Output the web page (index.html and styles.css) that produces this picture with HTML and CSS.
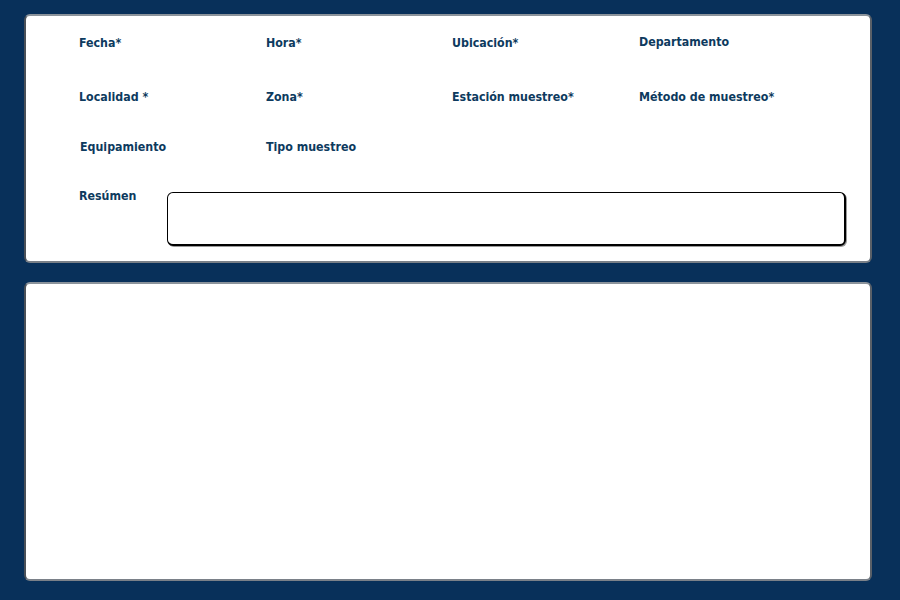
FILE: index.html
```html
<!DOCTYPE html>
<html lang="es">
<head>
<meta charset="utf-8">
<title>Muestreo</title>
<link rel="stylesheet" href="styles.css">
</head>
<body>
<div class="page">
  <section class="panel panel-form">
    <div class="fields">
      <div class="row row-1">
        <label class="lbl">Fecha*</label>
        <label class="lbl">Hora*</label>
        <label class="lbl">Ubicación*</label>
        <label class="lbl lbl-up">Departamento</label>
      </div>
      <div class="row row-2">
        <label class="lbl">Localidad *</label>
        <label class="lbl">Zona*</label>
        <label class="lbl">Estación muestreo*</label>
        <label class="lbl">Método de muestreo*</label>
      </div>
      <div class="row row-3">
        <label class="lbl lbl-shift">Equipamiento</label>
        <label class="lbl">Tipo muestreo</label>
      </div>
      <div class="row-summary">
        <label class="lbl">Resúmen</label>
        <div class="summary-box"></div>
      </div>
    </div>
  </section>
  <section class="panel panel-list"></section>
</div>
</body>
</html>
```
FILE: styles.css
```css
html, body {
  margin: 0;
  padding: 0;
  background: #08305a;
}
body {
  font-family: "DejaVu Sans Condensed", "DejaVu Sans", Verdana, sans-serif;
  width: 900px;
  height: 600px;
  overflow: hidden;
}
.page {
  padding: 14px 28px 19px 24px;
  display: flex;
  flex-direction: column;
  gap: 19px;
  height: 600px;
  box-sizing: border-box;
}
.panel {
  background: #fff;
  border: 2px solid;
  border-color: #8b939b #5a6068 #7a8088 #4a5058;
  border-radius: 6px;
  box-sizing: border-box;
}
.panel-form {
  height: 249px;
  padding: 20px 0 0 53px;
}
.panel-list {
  flex: 1;
}
.row {
  display: grid;
  grid-template-columns: 187px 186px 187px 187px;
}
.row-1 { height: 54px; }
.row-2 { height: 50px; }
.row-3 { height: 49px; }
.lbl {
  font-size: 12.3px;
  font-weight: bold;
  color: #0d3a5e;
  line-height: 15px;
  display: block;
}
.lbl-up { margin-top: -1px; }
.lbl-shift { margin-left: 1px; }
.row-summary {
  display: flex;
  align-items: flex-start;
}
.row-summary .lbl {
  width: 88px;
}
.summary-box {
  margin-top: 3px;
  width: 679px;
  height: 54px;
  box-sizing: border-box;
  border: 1px solid #000;
  border-right-width: 2px;
  border-bottom-width: 2px;
  border-radius: 6px;
  box-shadow: 1px 1px 0 #9a9a9a;
  background: #fff;
}
```
